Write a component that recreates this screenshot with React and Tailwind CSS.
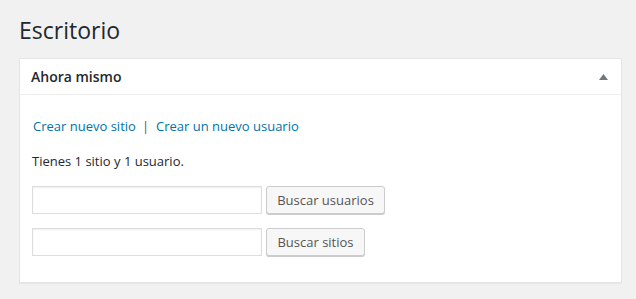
import React from 'react'

const font = { fontFamily: '"Open Sans", "Noto Sans", sans-serif' }

const SearchRow = ({ label, width }) => (
    <div className="flex items-center gap-[4px]">
        <input type="text" className="w-[230px] h-[28px] border border-[#ddd] bg-white shadow-[inset_0_1px_2px_rgba(0,0,0,0.07)] outline-none px-2 text-[14px]" />
        <button className={`${width} h-[28px] rounded-[3px] border border-[#ccc] bg-[#f7f7f7] text-[13px] text-[#555] shadow-[0_1px_0_#ccc] leading-[26px]`}>{label}</button>
    </div>
)

export default function App() {
    return (
        <div className="min-h-[299px] bg-[#f1f1f1] pl-[19px] pr-[14px] pt-[16px] text-[#444]" style={font}>
            <h1 className="text-[23px] leading-[29px] font-normal text-[#23282d]">Escritorio</h1>
            <div className="mt-[13px] bg-white border border-[#e5e5e5] shadow-[0_1px_1px_rgba(0,0,0,0.04)]">
                <div className="h-[36px] flex items-center justify-between pl-[11px] pr-[13px] border-b border-[#eee]">
                    <span className="text-[14px] font-semibold text-[#23282d]">Ahora mismo</span>
                    <svg width="9" height="6" viewBox="0 0 9 6"><path d="M4.5 0L9 6H0z" fill="#72777c" /></svg>
                </div>
                <div className="pl-[12px] pt-[22px] pb-[26px] text-[13px]">
                    <div className="leading-[19px] pl-[1px]">
                        <a className="text-[#0073aa]">Crear nuevo sitio</a>
                        <span className="text-[#555] pl-[6px] pr-[7px]">|</span>
                        <a className="text-[#0073aa]">Crear un nuevo usuario</a>
                    </div>
                    <p className="leading-[19px] mt-[16px] text-[#23282d]">Tienes 1 sitio y 1 usuario.</p>
                    <div className="mt-[15px] flex flex-col gap-[14px]">
                        <SearchRow label="Buscar usuarios" width="w-[119px]" />
                        <SearchRow label="Buscar sitios" width="w-[99px]" />
                    </div>
                </div>
            </div>
        </div>
    )
}
